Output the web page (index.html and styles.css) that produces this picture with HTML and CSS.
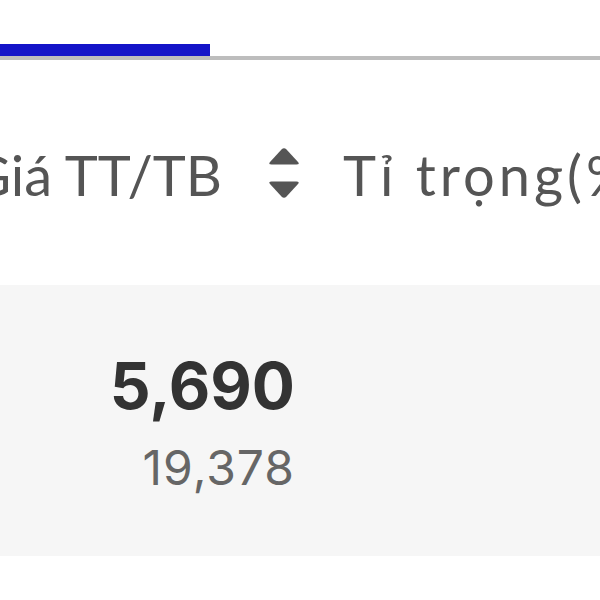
FILE: index.html
```html
<!DOCTYPE html>
<html lang="vi">
<head>
<meta charset="utf-8">
<link rel="stylesheet" href="styles.css">
</head>
<body>
<div class="tabs">
  <div class="tab-active"></div>
  <div class="tab-line"></div>
</div>
<div class="thead">
  <div class="th th-price">
    <span class="th-label">Giá TT/TB</span>
    <svg class="sort" width="32" height="52" viewBox="0 0 32 52">
      <path d="M13.5 2.5 Q16 0 18.5 2.5 L30 15 Q32 17.5 28.5 17.5 L3.5 17.5 Q0 17.5 2 15 Z" fill="#555"/>
      <path d="M13.5 49.5 Q16 52 18.5 49.5 L30 37 Q32 34.5 28.5 34.5 L3.5 34.5 Q0 34.5 2 37 Z" fill="#555"/>
    </svg>
  </div>
  <div class="th th-weight">
    <span class="th-label th-label-wide">Tỉ trọng(%)</span>
  </div>
</div>
<div class="row">
  <div class="td td-price">
    <div class="num-main">5,690</div>
    <div class="num-sub">19,378</div>
  </div>
</div>
</body>
</html>
```
FILE: styles.css
```css
html, body {
  margin: 0;
  padding: 0;
  background: #fff;
  overflow: hidden;
  font-family: Inter, "Noto Sans", sans-serif;
}
.tabs {
  padding-top: 44px;
  display: flex;
  flex-direction: column;
}
.tab-active {
  width: 210px;
  height: 12px;
  background: #1414c8;
}
.tab-line {
  height: 4px;
  background: #bdbdbd;
}
.thead {
  display: flex;
  align-items: center;
  height: 225px;
  white-space: nowrap;
}
.th {
  display: flex;
  align-items: center;
  color: #555;
  font-family: Lato, Inter, sans-serif;
  font-size: 56px;
}
.th-label {
  padding-top: 4px;
  line-height: 64px;
}
.th-label-wide {
  letter-spacing: 4px;
}
.th-price {
  width: 300px;
  flex: none;
  justify-content: flex-end;
  gap: 46px;
}
.th-weight {
  padding-left: 43px;
}
.sort {
  display: block;
  flex: none;
}
.row {
  background: #f6f6f6;
  height: 271px;
  display: flex;
  align-items: center;
}
.td-price {
  width: 295px;
  text-align: right;
}
.num-main {
  font-size: 64px;
  font-weight: 700;
  color: #333;
  line-height: 80px;
}
.num-sub {
  font-size: 48px;
  color: #666;
  line-height: 56px;
  margin-top: 14px;
  letter-spacing: 1px;
}
```
